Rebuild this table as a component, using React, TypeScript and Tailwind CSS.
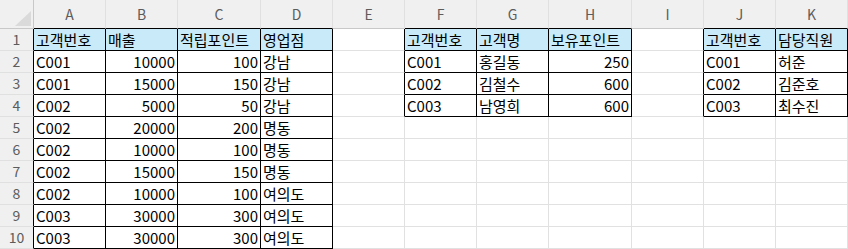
import React from 'react'

const cols = ['A', 'B', 'C', 'D', 'E', 'F', 'G', 'H', 'I', 'J', 'K']

// row-major sheet data, '' for empty
const rows: string[][] = [
  ['고객번호', '매출', '적립포인트', '영업점', '', '고객번호', '고객명', '보유포인트', '', '고객번호', '담당직원'],
  ['C001', '10000', '100', '강남', '', 'C001', '홍길동', '250', '', 'C001', '허준'],
  ['C001', '15000', '150', '강남', '', 'C002', '김철수', '600', '', 'C002', '김준호'],
  ['C002', '5000', '50', '강남', '', 'C003', '남영희', '600', '', 'C003', '최수진'],
  ['C002', '20000', '200', '명동', '', '', '', '', '', '', ''],
  ['C002', '10000', '100', '명동', '', '', '', '', '', '', ''],
  ['C002', '15000', '150', '명동', '', '', '', '', '', '', ''],
  ['C002', '10000', '100', '여의도', '', '', '', '', '', '', ''],
  ['C003', '30000', '300', '여의도', '', '', '', '', '', '', ''],
  ['C003', '30000', '300', '여의도', '', '', '', '', '', '', ''],
]

// r: 1-based sheet row, c: 0-based column index (A=0)
function inTable(r: number, c: number) {
  if (r < 1 || c < 0) return false
  if (c <= 3) return r <= 10
  if (c >= 5 && c <= 7) return r <= 4
  if (c >= 9 && c <= 10) return r <= 4
  return false
}

const isNum = (v: string) => /^\d+$/.test(v)

export default function App() {
  return (
    <div className="w-[848px] h-[249px] overflow-hidden bg-white font-['Noto_Sans_CJK_KR','Noto_Sans',sans-serif]">
      <div className="grid grid-cols-[34px_72px_72px_83px_72px_72px_72px_72px_83px_72px_72px_72px] grid-rows-[29px_repeat(10,22px)]">
        {/* corner */}
        <div className="relative bg-[#f0f0f0] border-r border-b border-[#c8c8c8]">
          <svg className="absolute right-[2px] bottom-[2px]" width="16" height="15" viewBox="0 0 16 15">
            <polygon points="16,0 16,15 0,15" fill="#dadada" />
          </svg>
        </div>
        {cols.map((col, c) => (
          <div
            key={col}
            className={
              'flex items-center justify-center bg-[#f0f0f0] border-r border-r-[#e0e0e0] border-b text-[14px] text-[#5c5c5c] ' +
              (inTable(1, c) ? 'border-b-black' : 'border-b-[#c8c8c8]')
            }
          >
            {col}
          </div>
        ))}
        {rows.map((row, ri) => {
          const r = ri + 1
          return (
            <React.Fragment key={r}>
              <div
                className={
                  'flex items-center justify-center bg-[#f0f0f0] border-b border-b-[#e0e0e0] border-r text-[14px] text-[#5c5c5c] ' +
                  (inTable(r, 0) ? 'border-r-black' : 'border-r-[#c8c8c8]')
                }
              >
                {r}
              </div>
              {row.map((v, c) => {
                const rightBlack = inTable(r, c) || inTable(r, c + 1)
                const bottomBlack = inTable(r, c) || inTable(r + 1, c)
                const head = r === 1 && inTable(r, c)
                return (
                  <div
                    key={c}
                    className={
                      'flex items-center px-[2px] overflow-hidden whitespace-nowrap text-[15px] leading-[21px] text-black border-r border-b ' +
                      (rightBlack ? 'border-r-black ' : 'border-r-[#e1e1e1] ') +
                      (bottomBlack ? 'border-b-black ' : 'border-b-[#e1e1e1] ') +
                      (head ? 'bg-[#c9eaf9] ' : 'bg-white ') +
                      (isNum(v) ? 'justify-end' : 'justify-start')
                    }
                  >
                    {v}
                  </div>
                )
              })}
            </React.Fragment>
          )
        })}
      </div>
    </div>
  )
}
